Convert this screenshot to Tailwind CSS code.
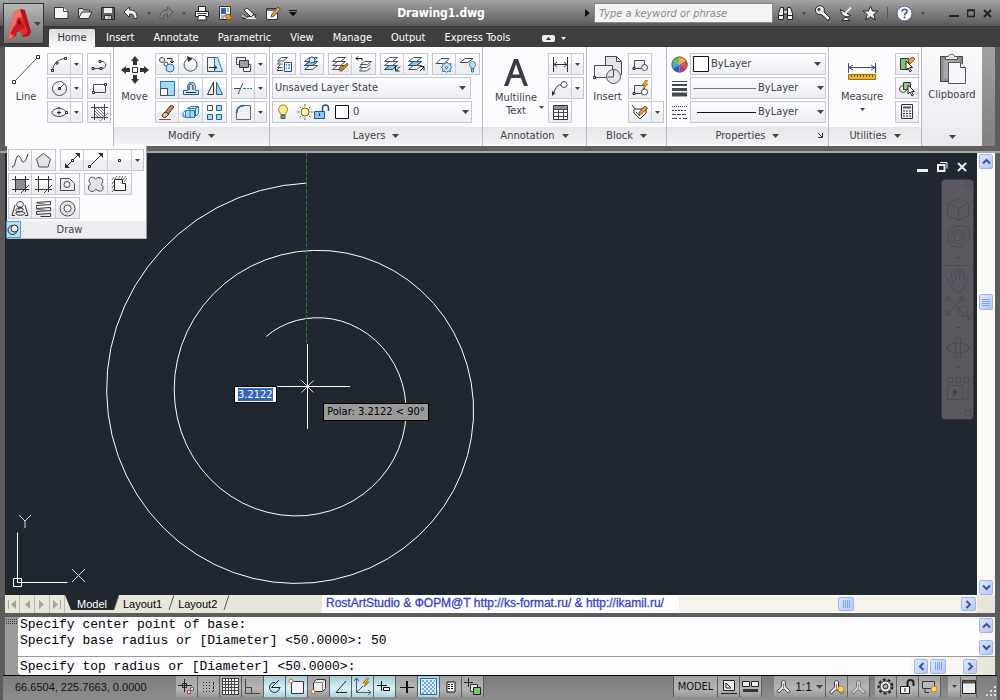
<!DOCTYPE html>
<html lang="en">
<head>
    <meta charset="UTF-8">
    <meta name="viewport" content="width=device-width, initial-scale=1.0">
    <title>Drawing1.dwg</title>
    <script src="https://cdn.jsdelivr.net/npm/@tailwindcss/browser@4"></script>
    <style>
        body { font-family: 'DejaVu Sans Condensed', 'Noto Sans', sans-serif; }
        svg { fill: none; stroke: #454a52; stroke-width: 1; flex-shrink: 0; }
        .solid { fill: #333; stroke: none; }
        .group-box { display: flex; height: 22px; border: 1px solid #c3c7d0; background: linear-gradient(#fdfdfe 45%, #eceef2 55%); }
        .group-box button { width: 22px; display: flex; align-items: center; justify-content: center; }
        .group-box button + button { width: 24px; border-left: 1px solid #c9cdd6; }
        .group-box button + .drop { width: 12px; }
        .panel-title { height: 17px; display: flex; align-items: center; justify-content: center; gap: 7px; background: linear-gradient(#e6e6ea, #f1f1f3); }
        .sb { display: flex; align-items: center; justify-content: center; background: linear-gradient(135deg, #dde8fe, #b3c8f6); border: 1px solid #9fb5e6; border-radius: 2px; }
        .st { width: 22px; display: flex; align-items: center; justify-content: center; border-right: 1px solid #5e5e5e; background: linear-gradient(#a2a2a2, #b6b6b6 60%, #999); }
        .on { background: linear-gradient(#a5cbd5, #d9f3f8 60%, #a4d3de); }
    </style>
</head>
<body class="h-screen overflow-hidden flex flex-col bg-[#5c5c5c] text-[11px] leading-[14px] text-[#3c3f45]">

<!-- Shared glyphs -->
<svg class="hidden">
    <symbol id="caret" viewBox="0 0 7 4"><path d="M0 0h7L3.500 4z" fill="#444" stroke="none"/></symbol>
    <symbol id="caret-s" viewBox="0 0 5 3"><path d="M0 0h5L2.500 3z" fill="#444" stroke="none"/></symbol>
    <symbol id="up" viewBox="0 0 9 7"><path d="M1 5.500L4.500 2L8 5.500" fill="none" stroke="#3b5594" stroke-width="2"/></symbol>
    <symbol id="down" viewBox="0 0 9 7"><path d="M1 1.500L4.500 5L8 1.500" fill="none" stroke="#3b5594" stroke-width="2"/></symbol>
    <symbol id="left" viewBox="0 0 7 9"><path d="M5.500 1L2 4.500L5.500 8" fill="none" stroke="#3b5594" stroke-width="2"/></symbol>
    <symbol id="right" viewBox="0 0 7 9"><path d="M1.500 1L5 4.500L1.500 8" fill="none" stroke="#3b5594" stroke-width="2"/></symbol>
    <symbol id="layers" viewBox="0 0 18 16"><g fill="#fafafa" stroke="#4d525a"><path d="M6.500 9.500h8l-5 4h-8z"/><path d="M6.500 5.500h8l-5 4h-8z"/><path d="M6.500 1.500h8l-5 4h-8z"/></g></symbol>
    <symbol id="scale" viewBox="0 0 16 16"><path d="M8 1l2 2v5l5 5-2 2-4-4h-2l-4 4-2-2 5-5V3z" fill="#eee" stroke="#333"/><path d="M8 5v5" stroke="#777"/></symbol>
</svg>

<header class="relative">
    <!-- Title bar -->
    <div class="h-[27px] flex items-center bg-linear-to-b from-[#a4a4a4] to-[#5a5a5a] border-b border-[#333] pl-[54px] pr-2">
        <div class="flex items-center gap-2">
            <button aria-label="New"><svg width="15" height="14"><path d="M.5 1.500h9l4.500 4v7H.5z" fill="#f4f4f4" stroke="#333"/><path d="M9.500 1.500v4H14" fill="#fff"/></svg></button>
            <button aria-label="Open"><svg width="16" height="14"><path d="M1.500 12.500v-10h4l1 1.500h6v2" fill="#ddd" stroke="#333"/><path d="M1.500 12.500l3.500-6.500h10l-3.500 6.500z" fill="#f1f1f1" stroke="#333"/></svg></button>
            <button aria-label="Save"><svg width="14" height="15"><path d="M.5 1.500h13v12h-13z" fill="#5b6470" stroke="#222"/><path d="M3 2h8v5H3z" fill="#eee" stroke="none"/><path d="M3.500 9.500h7v4h-7z" fill="#ddd" stroke="#333"/><path d="M8 10.500v2"/></svg></button>
            <button aria-label="Undo"><svg width="16" height="14"><path d="M1 6l5.500-5v3c5 0 8 2 7.500 8.500h-3c0-4-1.500-4.500-4.500-4.500v3.500z" fill="#f2f2f2" stroke="#333"/></svg></button>
            <svg width="4" height="3"><use href="#caret-s"/></svg>
            <button aria-label="Redo"><svg width="15" height="14"><path d="M14 6L8.500 1v3C4 4 .5 6 1 12.500h3C4 8.500 5.500 8 8.500 8v3.500z" fill="#858585" stroke="#555"/></svg></button>
            <svg width="4" height="3"><use href="#caret-s"/></svg>
            <button aria-label="Plot"><svg width="16" height="15"><path d="M4.500 5.500v-5h7v5M1.500 5.500h13v5h-13z" fill="#fafafa" stroke="#222"/><path d="M4.500 9.500h7l1 4.500h-9z" fill="#fff" stroke="#222"/><path d="M3 7.500h10" stroke="#555"/></svg></button>
            <button aria-label="Sheet set"><svg width="15" height="15"><path d="M1.500.5h11v13h-11z" fill="#f4f7fb" stroke="#333"/><path d="M3 2h5v6H3z" fill="#2c68b5" stroke="none"/><path d="M9 3h2M9 5h2M3 10h4M3 12h3" stroke="#667"/><path d="M7 9l4-1 3 4-4 2.500z" fill="#e89a2c" stroke="#8d5a14"/></svg></button>
            <button aria-label="Publish"><svg width="17" height="15"><path d="M1.500 12.500L15 8.500l-1 4z" fill="#ddd" stroke="#333"/><path d="M3 4l3-2 7 6-3 3z" fill="#eee" stroke="#333"/><path d="M1 9.500l5 3h9" stroke="#eee"/></svg></button>
            <button aria-label="Edit"><svg width="15" height="15"><path d="M.5 2.500h11v11H.5z" fill="#fafafa" stroke="#333"/><path d="M1 3h10v2H1z" fill="#68707c" stroke="none"/><path d="M5 11l1-3 6-7 2.500 2L8 10z" fill="#f2a33c" stroke="#555"/></svg></button>
            <button aria-label="Customize"><svg width="8" height="7"><path d="M0 .5h8" stroke="#111"/><path d="M0 2h8L4 6.500z" fill="#111" stroke="none"/></svg></button>
        </div>
        <h1 class="flex-1 text-center text-[12px] font-bold text-white">Drawing1.dwg</h1>
        <svg width="5" height="8"><path d="M0 0v8l5-4z" fill="#111" stroke="none"/></svg>
        <input type="text" aria-label="Search" placeholder="Type a keyword or phrase" class="ml-1 w-[179px] h-5 px-1 bg-[#f3f3f3] border border-[#888] italic placeholder:text-[#888]">
        <div class="ml-1 flex items-center">
            <button aria-label="Find"><svg width="17" height="16"><path d="M1.500 14.500v-6l2-6h3v12zM15.500 14.500v-6l-2-6h-3v12z" fill="#f2f2f2" stroke="#222"/><path d="M6.500 5h4v4h-4z" fill="#ccc" stroke="#222"/><path d="M1.500 10.500h5M10.500 10.500h5" stroke="#222"/></svg></button>
            <svg class="mx-2" width="4" height="3"><use href="#caret-s"/></svg>
            <button aria-label="Subscription"><svg width="17" height="16"><path d="M7.500 9.500L14 15.500l2-2.500-6-6a4.500 4.500 0 1 0-3 2.500z" fill="#f2f2f2" stroke="#222"/><circle cx="5" cy="4.500" r="1.200" fill="#444"/></svg></button>
            <button class="ml-2" aria-label="Communication"><svg width="15" height="16"><path d="M1.500 4.500C2 11 7 13.500 11.500 10.500z" fill="#f2f2f2" stroke="#222"/><path d="M6.500 8L12 2.500" stroke="#eee" stroke-width="2"/><path d="M3 15.500h8l-3-3H6z" fill="#eee" stroke="#222"/></svg></button>
            <button class="ml-2" aria-label="Favorites"><svg width="17" height="16"><path d="M8.500 1l2 5h5.500l-4.300 3.500 1.600 5.500-4.800-3.300L3.700 15l1.600-5.500L1 6h5.500z" fill="#f2f2f2" stroke="#222"/></svg></button>
            <span class="mx-2 h-3 w-px bg-[#555]"></span>
            <button aria-label="Help"><svg width="17" height="17"><circle cx="8.500" cy="8.500" r="7.500" fill="#fff" stroke="#4c5c7c"/><path d="M6 6.500c0-3 5-3 5 0 0 2-2.500 1.500-2.500 4M8.500 11.500v2" stroke="#2f5ea8" stroke-width="1.700"/></svg></button>
            <svg class="mx-2" width="4" height="3"><use href="#caret-s"/></svg>
            <button class="ml-4" aria-label="Minimize"><svg width="10" height="10"><path d="M0 8h10" stroke="#222" stroke-width="2"/></svg></button>
            <button class="ml-2" aria-label="Maximize"><svg width="8" height="9"><path d="M.5 1.500h7v6h-7zM0 1h8" stroke="#222" stroke-width="1.500"/></svg></button>
            <button class="ml-2" aria-label="Close"><svg width="9" height="9"><path d="M1 1l7 7M8 1L1 8" stroke="#222" stroke-width="2"/></svg></button>
        </div>
    </div>

    <!-- Ribbon tabs -->
    <nav class="h-5 flex items-end bg-[#3e3e3e] pl-[49px] text-[11px] font-medium text-white">
        <a href="#" class="h-[18px] w-[46px] text-center leading-[17px] bg-linear-to-b from-[#dcdcde] to-[#fafafc] text-[#333] rounded-t-[2px]">Home</a>
        <div class="flex ml-[11px] gap-[19px] h-[18px] leading-[17px]">
            <a href="#">Insert</a>
            <a href="#">Annotate</a>
            <a href="#">Parametric</a>
            <a href="#">View</a>
            <a href="#">Manage</a>
            <a href="#">Output</a>
            <a href="#">Express Tools</a>
        </div>
        <button class="ml-8 h-[18px] flex items-center gap-[6px]" aria-label="Minimize ribbon">
            <svg width="13" height="7"><rect width="13" height="7" rx="2" fill="#eee" stroke="none"/><path d="M4 5h5L6.500 2z" fill="#333" stroke="none"/></svg>
            <svg width="5" height="3"><path d="M0 0h5L2.500 3z" fill="#eee" stroke="none"/></svg>
        </button>
    </nav>

    <!-- Application button -->
    <button aria-label="Application menu" class="absolute left-[3px] top-[3px] w-[41px] h-[41px] flex items-center pl-[3px] gap-[2px] border border-[#333] bg-linear-to-b from-[#b8b8b8] to-[#747474]">
        <svg width="25" height="34">
            <path d="M8 5l6-3 4 1 6 22-2 4-6 1-2-6-4 1-1 4-6 3-2-2z" fill="#b3141c" stroke="none"/>
            <path d="M7 5l6-3 8 24-6 3-2-6-4 1-2 6-6 3z" fill="#e02b30" stroke="none"/>
            <path d="M7 5l6-3 2 8-5 1-5 20-4 1z" fill="#f4716c" stroke="none"/>
            <path d="M10 18l2-7 3 6z" fill="#7d0c12" stroke="none"/>
            <path d="M3 27l4-8 9-2 2 4-9 2-3 5z" fill="#c9171f" stroke="none"/>
        </svg>
        <svg width="7" height="4"><use href="#caret"/></svg>
    </button>
</header>

<!-- Ribbon -->
<section class="relative z-20 h-[99px] shrink-0 ml-[5px] mr-[5px] flex bg-linear-to-b from-[#a2a2a2] to-[#808080]">

    <!-- Draw -->
    <div class="relative w-[109px] shrink-0 flex bg-[#fcfcfe] border-r border-[#b9b9bd] pt-[6px]">
        <button class="w-[42px] flex flex-col items-center gap-1 self-start">
            <svg width="32" height="33"><path d="M4 29L27 5" stroke="#555"/><path d="M2.500 27.500h3v3h-3zM26.500 2.500h3v3h-3z" fill="#fff" stroke="#333"/></svg>
            Line
        </button>
        <div class="flex flex-col gap-[2px]">
            <div class="group-box"><button aria-label="Arc"><svg width="17" height="17"><path d="M1.500 14.500C2 8 7 3 14 2.500"/><path d="M.5 13.500h2v2h-2zM5 6h2v2H5zM13.500 1.500h2v2h-2z" fill="#fff" stroke="#222"/></svg></button><button class="drop" aria-label="Arc options"><svg width="5" height="3"><use href="#caret-s"/></svg></button></div>
            <div class="group-box"><button aria-label="Circle"><svg width="17" height="17"><circle cx="8.500" cy="8.500" r="7"/><path d="M8.500 8.500L13 4"/><path d="M7.500 7.500h2v2h-2z" stroke="#222"/></svg></button><button class="drop" aria-label="Circle options"><svg width="5" height="3"><use href="#caret-s"/></svg></button></div>
            <div class="group-box"><button aria-label="Ellipse"><svg width="17" height="13"><ellipse cx="8" cy="6.500" rx="7" ry="4"/><path d="M8 4.500v4M6 6.500h4" stroke="#222"/><path d="M7.500 1.500h1v1h-1zM14.500 5.500h2v2h-2z" fill="#fff" stroke="#222"/></svg></button><button class="drop" aria-label="Ellipse options"><svg width="5" height="3"><use href="#caret-s"/></svg></button></div>
        </div>
        <div class="flex flex-col gap-[2px] ml-1">
            <div class="group-box"><button aria-label="Polyline"><svg width="17" height="15"><path d="M2 11.500h9c5 0 5-7 0-7H9"/><path d="M1 10.500h2v2H1zM8 3.500h2v2H8zM9 10.500h2v2H9z" fill="#fff" stroke="#222"/></svg></button></div>
            <div class="group-box"><button aria-label="Rectangle"><svg width="17" height="15"><path d="M2.500 3.500h12v8h-12z"/><path d="M1.500 10.500h2v2h-2zM13.500 2.500h2v2h-2z" fill="#fff" stroke="#222"/></svg></button></div>
            <div class="group-box"><button aria-label="Hatch"><svg width="17" height="17"><path d="M3.500 0v16M13.500 0v16M0 3.500h17M0 13.500h17" stroke="#444"/><path d="M4 4l9 9M7 4l6 6M4 7l6 6M10 4l3 3M4 10l3 3M9 17l8-8" stroke="#777"/></svg></button></div>
        </div>

        <!-- Expanded Draw panel -->
        <div class="absolute left-[2px] top-full w-[140px] bg-[#fcfcfe] pt-[3px] border-r border-[#999]">
            <div class="flex flex-col gap-[2px] px-px">
                <div class="flex gap-1">
                    <div class="group-box">
                        <button aria-label="Spline"><svg width="18" height="17"><path d="M1 15C5 15 4 5 7 4s3 6 5 6 3-2 5-8" stroke="#333"/></svg></button>
                        <button aria-label="Polygon"><svg width="17" height="17"><path d="M8.500 1.500l7 5.500-2.500 8H4L1.500 7z" fill="#e5e5e7"/></svg></button>
                    </div>
                    <div class="group-box">
                        <button aria-label="Construction line"><svg width="17" height="17"><path d="M2 15L15 2" stroke="#333"/><path d="M1 16v-5l5 5zM16 1v5l-5-5z" class="solid"/><path d="M7.500 7.500h2v2h-2z" fill="#fff" stroke="#222"/></svg></button>
                        <button aria-label="Ray"><svg width="17" height="17"><path d="M2 15L15 2" stroke="#333"/><path d="M16 1v5l-5-5z" class="solid"/><path d="M1.500 13.500h2v2h-2z" fill="#fff" stroke="#222"/></svg></button>
                        <button aria-label="Point"><svg width="5" height="5"><path d="M1.500 1.500h2v2h-2z" stroke="#222"/></svg></button>
                        <button class="drop" aria-label="Point options"><svg width="5" height="3"><use href="#caret-s"/></svg></button>
                    </div>
                </div>
                <div class="flex gap-1">
                    <div class="group-box">
                        <button aria-label="Gradient"><svg width="17" height="17"><path d="M4 4h9v9H4z" fill="#8c8c90" stroke="none"/><path d="M3.500 0v16M13.500 0v16M0 3.500h17M0 13.500h17M9 17l8-8" stroke="#333"/></svg></button>
                        <button aria-label="Boundary"><svg width="17" height="17"><path d="M3.500 0v16M13.500 0v16M0 3.500h17M0 13.500h17M9 17l8-8" stroke="#333"/></svg></button>
                        <button aria-label="Region"><svg width="17" height="15"><path d="M1.500 1.500h9l5 5v7h-14z" fill="#ececee"/><circle cx="8" cy="7.500" r="3"/></svg></button>
                    </div>
                    <div class="group-box">
                        <button aria-label="Revision cloud"><svg width="18" height="17"><path d="M8.500 3C7 0 1.500 1 2 5c0 2 2 2 1.500 3.500C1 9 0 15 5 15.500c2 0 3-1 4-2.500 2 3 7 3 7-1 0-2-1-3-2-3.500 3-2 2-7-2-7-2 0-3 1-3.500 1.500z" fill="#e5e5e7"/></svg></button>
                        <button aria-label="Wipeout"><svg width="17" height="17"><path d="M3.500 3.500h8v4h3v7h-11z" fill="#fff" stroke="#222"/><path d="M1 4l2-3M4 3l2-3M7 3l2-3M10 3l2-3M13 6l3-4M1 8l2-3M1 12l2-3M1 16l2-3M12 4l3-4" stroke="#666"/></svg></button>
                    </div>
                </div>
                <div class="flex">
                    <div class="group-box">
                        <button aria-label="Helix"><svg width="18" height="17"><path d="M4 5L1 15.500h3M14 5l3 10.500h-3" stroke="#333"/><path d="M10 7C5 8 4 2 9 1.500s4 7-1 6.500M12 9c-4-3-8 0-7 2s8 1 7-2-5-2-4 1M14 13c0 3-10 3-9 0s8-1 9 0" stroke="#333"/></svg></button>
                        <button aria-label="3D polyline"><svg width="18" height="17"><path d="M1.500 2.500l14-1v3l-14 1v3l14-1v3l-14 1v3l14-1v3h-10" stroke="#333"/><path d="M1 3l15 2M1 9l15 2" stroke="#777"/></svg></button>
                        <button aria-label="Donut"><svg width="17" height="17"><circle cx="8.500" cy="8.500" r="7.500" fill="#e5e5e7"/><circle cx="8.500" cy="8.500" r="3.500" fill="#fff"/></svg></button>
                    </div>
                </div>
            </div>
            <div class="h-[18px] mt-[2px] flex items-center bg-[#ededf0] border-b border-[#bbb]">
                <button aria-label="Pin" class="w-[15px] h-[17px] flex items-center justify-center border border-[#4b9cd8] bg-[#b9def7] -ml-px"><svg width="13" height="13"><circle cx="5.500" cy="7" r="4.500" stroke="#222"/><circle cx="7.500" cy="5.500" r="3.500" fill="#fff" stroke="#222"/></svg></button>
                <span class="flex-1 text-center pr-7">Draw</span>
            </div>
        </div>
    </div>

    <!-- Modify -->
    <div class="w-[156px] shrink-0 flex flex-col justify-between bg-[#fcfcfe] border-r border-[#b9b9bd] pt-[6px] pb-[2px]">
        <div class="flex">
            <button class="w-[41px] flex flex-col items-center gap-1 self-start">
                <svg width="30" height="33"><path d="M15 3l4 5h-2v4h-4V8h-2zM15 31l4-5h-2v-4h-4v4h-2zM1 17l5-4v2h4v4H6v2zM29 17l-5-4v2h-4v4h4v2z" class="solid"/><path d="M12.500 14.500h5v5h-5z" fill="#fff" stroke="#333"/></svg>
                Move
            </button>
            <div class="flex flex-col gap-[2px]">
                <div class="group-box">
                    <button aria-label="Copy"><svg width="18" height="17"><circle cx="4" cy="4" r="2.500"/><circle cx="8" cy="8" r="2" fill="#eee"/><circle cx="12" cy="12" r="4" fill="#bfe0f4" stroke="#2878b0"/><path d="M9 2.500h5v4M12 5l2 2 2-2" stroke="#222"/></svg></button>
                    <button aria-label="Rotate"><svg width="17" height="17"><path d="M5.500 3A6.500 6.500 0 1 0 11 2.700"/><path d="M5 0l6 2.500L6 6z" class="solid"/></svg></button>
                    <button aria-label="Stretch"><svg width="18" height="17"><path d="M1.500 1.500h7v14h-7z" fill="#f2f2f2"/><path d="M8.500 1.500h3l5 14h-8z" fill="#cbe7f7" stroke="#2878b0"/><path d="M3 11.500h7M8 9l3 2.500L8 14" stroke="#222"/></svg></button>
                </div>
                <div class="group-box">
                    <button aria-label="Scale"><svg width="17" height="17"><path d="M1.500 1.500h14v14h-14z" fill="#a9d6f1" stroke="#2878b0"/><path d="M1.500 8.500h7v7h-7z" fill="#f7f7f7"/></svg></button>
                    <button aria-label="Offset"><svg width="18" height="17"><path d="M1.500 14.500v-4h4c1-1 0-2 0-3 0-7 8-7 8 0 0 1-1 2 0 3h3v4z" fill="#cbe7f7" stroke="#20639b"/><path d="M4 12.500h10M7 10V7c0-4 4-4 4 0v3" stroke="#222"/></svg></button>
                    <button aria-label="Mirror"><svg width="18" height="17"><path d="M7.500 2v12.500h-6z" fill="#eee" stroke="#333"/><path d="M10.500 2v12.500h6z" fill="#a9d6f1" stroke="#20639b"/></svg></button>
                </div>
                <div class="group-box">
                    <button aria-label="Erase"><svg width="18" height="17"><path d="M5 11l7-9c1-1 4 0 4 1l-8 10z" fill="#c08a5a" stroke="#4c3626"/><path d="M4 11l3-3 4 2-3 3c-2 1-4 0-4-2z" fill="#e8c66a" stroke="#333"/><path d="M1 15.500h12" stroke="#c0392b"/></svg></button>
                    <button aria-label="Explode"><svg width="18" height="16"><path d="M5.500 4.500l3-2h8l-3 2zM13.500 4.500l3-2v7l-3 3z" fill="#d5ecf9" stroke="#2878b0"/><path d="M3.500 6.500h9v7h-9zM1.500 8l2-1.500M8 5v9M1 8.500v4l3 1" fill="#a9d6f1" stroke="#2878b0"/></svg></button>
                    <button aria-label="Array"><svg width="17" height="17"><path d="M1.500 1.500h5v5h-5z" fill="#f5f5f5"/><path d="M10.500 1.500h5v5h-5zM1.500 10.500h5v5h-5zM10.500 10.500h5v5h-5z" fill="#a9d6f1" stroke="#20639b"/></svg></button>
                </div>
            </div>
            <div class="flex flex-col gap-[2px] ml-1">
                <div class="group-box"><button aria-label="Draw order"><svg width="17" height="17"><path d="M1.500 1.500h9v7h-9z" fill="#eee"/><path d="M8.500 8.500h7v7h-7z" fill="#fff"/><path d="M4.500 4.500h9v7h-9z" fill="#9c9ca2" stroke="#333"/></svg></button><button class="drop" aria-label="Order options"><svg width="5" height="3"><use href="#caret-s"/></svg></button></div>
                <div class="group-box"><button aria-label="Trim"><svg width="18" height="15"><path d="M0 7.500h7M4 13L9 2"/><path d="M9 7.500h3M13 7.500h2M16 7.500h2" stroke="#2878b0"/></svg></button><button class="drop" aria-label="Trim options"><svg width="5" height="3"><use href="#caret-s"/></svg></button></div>
                <div class="group-box"><button aria-label="Fillet"><svg width="17" height="17"><path d="M1.500 15.500v-6c0-5 3-8 8-8h6v14z" fill="#eef0f3" stroke="#667"/><path d="M1.500 9.500c0-5 3-8 8-8" stroke="#20639b" stroke-width="1.500"/></svg></button><button class="drop" aria-label="Fillet options"><svg width="5" height="3"><use href="#caret-s"/></svg></button></div>
            </div>
        </div>
        <div class="panel-title">Modify <svg width="7" height="4"><use href="#caret"/></svg></div>
    </div>

    <!-- Layers -->
    <div class="w-[213px] shrink-0 flex flex-col justify-between bg-[#fcfcfe] border-r border-[#b9b9bd] pt-[6px] pb-[2px]">
        <div class="flex flex-col gap-[2px] px-[2px]">
            <div class="flex gap-1">
                <div class="group-box"><button aria-label="Layer properties"><svg width="18" height="17"><path d="M6.500 1.500h6l-4 3.500h-6zM5 5.500L2.500 8h5M5 9l-2.500 2.500h5M4 12l-2 2.500h6" fill="#fff"/><path d="M9.500 6.500h7v9h-7z" fill="#e6f1fa" stroke="#20508a"/><path d="M11 9h1M13 9h2M11 12h1M13 12h2" stroke="#20508a"/></svg></button></div>
                <div class="group-box"><button aria-label="Make current"><svg width="18" height="16"><use href="#layers"/><path d="M6.500 5.500h8l-5 4h-8z" fill="#8cc6ea" stroke="#20508a"/><circle cx="9" cy="4" r="3" fill="#dff0fa" stroke="#20508a"/></svg></button></div>
                <div class="group-box"><button aria-label="Match layer"><svg width="18" height="16"><use href="#layers"/><path d="M8 12l3-3 1 2 4-4 1 2-4 4-2 2H9z" fill="#c9812f" stroke="#8a5a22"/></svg></button><button aria-label="Previous layer"><svg width="18" height="17"><path d="M9.500 5.500h7l-4 3h-7zM7 8.500l-2.500 3h7l4-3M7 12l-2.500 3h7l4-3" fill="#fafafa" stroke="#4d525a"/><path d="M1 2.500h6v2M3 .5L1 2.500l2 2" stroke="#111"/></svg></button></div>
                <div class="group-box"><button aria-label="Isolate layer"><svg width="18" height="16"><use href="#layers"/><path d="M6.500 9.500h7l-4 4h-8z" fill="#8cc6ea" stroke="#20508a"/><path d="M17 10.500l-4 4M12.500 11v4h4" stroke="#111"/></svg></button><button aria-label="Unisolate layer"><svg width="18" height="16"><use href="#layers"/><path d="M6.500 5.500h8l-5 4h-8z" fill="#8cc6ea" stroke="#20508a"/><path d="M13 15l4-4M13 10.500h4v4" stroke="#111"/></svg></button></div>
                <div class="group-box"><button aria-label="Freeze layer"><svg width="18" height="17"><path d="M6 2.500h8l-5 5H1z" fill="#fff"/><path d="M12 6l1.500 2 2.500-.5-.5 2.500L17 11.500 15 13l.5 2.500-2.500-.5-1.500 1.500L10 15l-2.500.5L8 13l-1.500-1.500L8 10l-.5-2.500L10 8z" fill="#cfe6f6" stroke="#2c72ae"/><circle cx="11.500" cy="11.500" r="1.200" fill="#fff" stroke="#2c72ae"/></svg></button><button aria-label="Turn layer off"><svg width="18" height="17"><path d="M6 2.500h8l-5 4H1z" fill="#fff"/><path d="M10.500 8.500c0-4 6-4 6 0 0 2-1.500 2-1.500 4h-3c0-2-1.500-2-1.500-4zM12.500 13h2v3h-2z" fill="#b7daf0" stroke="#3f78a8"/></svg></button></div>
            </div>
            <div class="flex items-center h-[22px] w-[199px] border border-[#c3c7d0] bg-linear-to-b from-[#fdfdfe] to-[#eceef2] pr-1">
                <select aria-label="Layer state" class="appearance-none flex-1 h-full pl-[2px] bg-transparent"><option>Unsaved Layer State</option></select>
                <svg width="7" height="4"><use href="#caret"/></svg>
            </div>
            <div class="flex items-center h-[22px] w-[200px] border border-[#c3c7d0] bg-linear-to-b from-[#fdfdfe] to-[#eceef2] pl-1 pr-[2px]">
                <svg width="12" height="17"><path d="M1.500 5.500c0-6 9-6 9 0 0 2-2 3-2 5h-5c0-2-2-3-2-5z" fill="#ffe98a" stroke="#97812d"/><path d="M4 11.500h4v3H4z" fill="#8898aa" stroke="#555"/></svg>
                <svg class="ml-2" width="17" height="17"><circle cx="8" cy="8" r="4" fill="#fff1a6" stroke="#7b6a22"/><path d="M8 0v2.500M8 13.500V16M0 8h2.500M13.500 8H16M2.500 2.500L4 4M12 12l1.500 1.500M13.500 2.500L12 4M4 12l-1.500 1.500" stroke="#7b6a22"/></svg>
                <svg width="17" height="16"><path d="M.5 7.500h10v7H.5z" fill="#8fc8ea" stroke="#20508a"/><path d="M8.500 7V4c0-4 6-4 6 0v3" stroke="#20508a" stroke-width="1.500"/><path d="M5.500 9v3" stroke="#123"/></svg>
                <svg class="ml-1" width="14" height="14"><path d="M.5.500h13v13H.5z" fill="#fff" stroke="#111"/></svg>
                <select aria-label="Layer" class="appearance-none flex-1 h-full pl-1 bg-transparent"><option>0</option></select>
                <svg width="7" height="4"><use href="#caret"/></svg>
            </div>
        </div>
        <div class="panel-title">Layers <svg width="7" height="4"><use href="#caret"/></svg></div>
    </div>

    <!-- Annotation -->
    <div class="w-[104px] shrink-0 flex flex-col justify-between bg-[#fcfcfe] border-r border-[#b9b9bd] pt-[6px] pb-[2px]">
        <div class="flex justify-end pr-[2px]">
            <button class="flex-1 flex items-end justify-end self-start gap-[2px] pr-1">
                <span class="flex flex-col items-center leading-[13px]">
                    <svg class="mb-1" width="28" height="34"><path d="M2 33L12 6h4l10 27h-4l-3-8H9l-3 8zM10.500 21.500h7L14 11z" fill="#3a3d42" stroke="none"/></svg>
                    Multiline<br>Text
                </span>
                <svg class="mb-2" width="5" height="3"><use href="#caret-s"/></svg>
            </button>
            <div class="flex flex-col gap-[2px]">
                <div class="group-box"><button aria-label="Linear dimension"><svg width="17" height="15"><path d="M1.500 0v15M15.500 0v15M2 7.500h13M5 5L2 7.500 5 10M12 5l3 2.500-3 2.500" stroke="#333"/></svg></button><button class="drop" aria-label="Dimension options"><svg width="5" height="3"><use href="#caret-s"/></svg></button></div>
                <div class="group-box"><button aria-label="Leader"><svg width="18" height="17"><circle cx="13" cy="4.500" r="3"/><path d="M10 5c-3 0-4 0-8 9" stroke="#333"/><path d="M1 16v-5l3.500 2z" class="solid"/></svg></button><button class="drop" aria-label="Leader options"><svg width="5" height="3"><use href="#caret-s"/></svg></button></div>
                <div class="group-box self-start"><button aria-label="Table"><svg width="17" height="17"><path d="M1.500 1.500h14v14h-14z" fill="#fff" stroke="#333"/><path d="M2 2h13v3H2z" fill="#8c8f96" stroke="none"/><path d="M1.500 5.500h14M1.500 8.500h14M1.500 12.500h14M6.500 5v10M11.500 5v10"/></svg></button></div>
            </div>
        </div>
        <div class="panel-title">Annotation <svg width="7" height="4"><use href="#caret"/></svg></div>
    </div>

    <!-- Block -->
    <div class="w-[80px] shrink-0 flex flex-col justify-between bg-[#fcfcfe] border-r border-[#b9b9bd] pt-[6px] pb-[2px]">
        <div class="flex">
            <button class="w-[41px] flex flex-col items-center gap-1 self-start">
                <svg width="32" height="33"><path d="M13.500 3.500h11l5 5v13h-16z" fill="#e4e5e9"/><path d="M24.500 3.500v5h5"/><path d="M2.500 12.500h18v12h-18z" fill="#f1f2f5"/><circle cx="21.500" cy="23.500" r="7" fill="#e4e6ea" stroke="#555"/><path d="M21.500 17v7h-6" /><path d="M1.500 23.500h2v2h-2z" fill="#fff" stroke="#222"/></svg>
                Insert
            </button>
            <div class="flex flex-col gap-[2px]">
                <div class="group-box self-start"><button aria-label="Create block"><svg width="17" height="15"><path d="M2.500 3.500h10v8h-10z" fill="#eee"/><circle cx="12.500" cy="10.500" r="3" fill="#fff"/><path d="M1 10.500h2v2H1z" fill="#fff" stroke="#222"/></svg></button></div>
                <div class="group-box self-start"><button aria-label="Block editor"><svg width="17" height="17"><path d="M2.500 5.500h10v8h-10z" fill="#eee"/><circle cx="12.500" cy="12" r="3" fill="#fff"/><path d="M14 0l-4 5h3l-2 4 5-5h-3l3-4z" fill="#f7b731" stroke="#b67a10"/><path d="M1 12.500h2v2H1z" fill="#fff" stroke="#222"/></svg></button></div>
                <div class="group-box self-start"><button aria-label="Edit attributes"><svg width="18" height="17"><path d="M1 1l3 4h11v4l-6 6-6-6V5" fill="#f7f7f7" stroke="#222"/><path d="M5 8l4 4" stroke="#555"/><path d="M14 2l2.500 2-6 6-3 1 1-3z" fill="#f2a33c" stroke="#7a4a12"/></svg></button><button class="drop" aria-label="Attribute options"><svg width="5" height="3"><use href="#caret-s"/></svg></button></div>
            </div>
        </div>
        <div class="panel-title">Block <svg width="7" height="4"><use href="#caret"/></svg></div>
    </div>

    <!-- Properties -->
    <div class="w-[162px] shrink-0 flex flex-col justify-between bg-[#fcfcfe] border-r border-[#b9b9bd] pt-[6px] pb-[2px]">
        <div class="flex flex-col gap-[2px] pl-1 pr-[2px]">
            <div class="flex items-center gap-[2px]">
                <svg width="17" height="17"><g stroke="none"><path d="M8.500 8.500V.500A8 8 0 0 1 15.500 4.500z" fill="#f0b03c"/><path d="M8.500 8.500l7-4a8 8 0 0 1 0 8z" fill="#e0503a"/><path d="M8.500 8.500l7 4a8 8 0 0 1-7 4z" fill="#b03a9c"/><path d="M8.500 8.500v8a8 8 0 0 1-7-4z" fill="#3a58c8"/><path d="M8.500 8.500l-7 4a8 8 0 0 1 0-8z" fill="#35b6c9"/><path d="M8.500 8.500l-7-4a8 8 0 0 1 7-4z" fill="#6cc24a"/></g><circle cx="8.500" cy="8.500" r="7.500" stroke="#666"/></svg>
                <div class="flex-1 flex items-center h-[22px] border border-[#c3c7d0] bg-linear-to-b from-[#fdfdfe] to-[#eceef2] pl-[2px] pr-1">
                    <svg width="16" height="16"><path d="M.5.500h15v15H.5z" fill="#fff" stroke="#111"/></svg>
                    <select aria-label="Object color" class="appearance-none flex-1 h-full pl-[2px] bg-transparent"><option>ByLayer</option></select>
                    <svg width="7" height="4"><use href="#caret"/></svg>
                </div>
            </div>
            <div class="flex items-center gap-[2px]">
                <svg width="17" height="17"><path d="M1 1.500h15" /><path d="M1 5h15" stroke-width="2"/><path d="M1 9.500h15" stroke-width="3"/><path d="M1 14.500h15" stroke-width="4"/></svg>
                <div class="flex-1 flex items-center h-[22px] border border-[#c3c7d0] bg-linear-to-b from-[#fdfdfe] to-[#eceef2] pl-[2px] pr-px">
                    <svg width="63" height="3"><path d="M0 1.500h63" stroke="#777"/></svg>
                    <select aria-label="Lineweight" class="appearance-none flex-1 h-full pl-[2px] bg-transparent"><option>ByLayer</option></select>
                    <svg width="7" height="4"><use href="#caret"/></svg>
                </div>
            </div>
            <div class="flex items-center gap-[2px]">
                <svg width="17" height="17"><path d="M1 2.500h15" stroke-dasharray="1 1"/><path d="M1 6.500h15" stroke-dasharray="2 1"/><path d="M1 10.500h15" stroke-dasharray="4 1"/><path d="M1 14.500h15" stroke-dasharray="5 2 2 2"/></svg>
                <div class="flex-1 flex items-center h-[22px] border border-[#c3c7d0] bg-linear-to-b from-[#fdfdfe] to-[#eceef2] pl-[6px] pr-px">
                    <svg width="59" height="3"><path d="M0 1.500h59" stroke="#111"/></svg>
                    <select aria-label="Linetype" class="appearance-none flex-1 h-full pl-[2px] bg-transparent"><option>ByLayer</option></select>
                    <svg width="7" height="4"><use href="#caret"/></svg>
                </div>
            </div>
        </div>
        <div class="panel-title relative">Properties <svg width="7" height="4"><use href="#caret"/></svg>
            <button aria-label="Properties palette" class="absolute right-[5px]"><svg width="5" height="5"><path d="M0 0l4 4M4.500 0v4.500H0" stroke="#333"/></svg></button>
        </div>
    </div>

    <!-- Utilities -->
    <div class="w-[93px] shrink-0 flex flex-col justify-between bg-[#fcfcfe] border-r border-[#b9b9bd] pt-[6px] pb-[2px]">
        <div class="flex justify-end pr-[2px]">
            <button class="flex-1 flex flex-col items-center gap-1 self-start">
                <svg width="30" height="33"><path d="M1.500 10v10M28.500 10v10M2 14.500h26M6 12l-4 2.500L6 17M24 12l4 2.500-4 2.500" stroke="#2d4f78"/><path d="M1.500 21.500h27v5h-27z" fill="#f0b52b" stroke="#9a6a10"/><path d="M4.500 22v2M7.500 22v2M10.500 22v2M13.500 22v2M16.500 22v2M19.500 22v2M22.500 22v2M25.500 22v2" stroke="#7a5210"/></svg>
                Measure
                <svg width="5" height="3"><use href="#caret-s"/></svg>
            </button>
            <div class="flex flex-col gap-[2px]">
                <div class="group-box"><button aria-label="Quick select"><svg width="18" height="17"><path d="M2.500 2.500h8v11h-8z" fill="#7fc36a" stroke="#333"/><path d="M10 4l5-3 2 2-5 5z" fill="#f2a33c" stroke="#8a5a14"/><path d="M8 5v9l2-2 2 4 1.500-1-2-3.500h3z" fill="#fff" stroke="#222"/></svg></button></div>
                <div class="group-box"><button aria-label="Select all"><svg width="18" height="17"><circle cx="5" cy="9" r="3.500"/><path d="M5.500 2.500h7v7h-7z" fill="#8fce7a" stroke="#333"/><path d="M10 5v9l2-2 2 4 1.500-1-2-3.500h3z" fill="#fff" stroke="#222"/></svg></button></div>
                <div class="group-box"><button aria-label="Calculator"><svg width="12" height="16"><path d="M.5.500h11v14H.5z" fill="#f1f1f4" stroke="#333"/><path d="M2 3.500h8" stroke="#555" stroke-width="2"/><path d="M2 7h8M2 9.500h8M2 12h8" stroke="#333" stroke-dasharray="2 1"/></svg></button></div>
            </div>
        </div>
        <div class="panel-title">Utilities <svg width="7" height="4"><use href="#caret"/></svg></div>
    </div>

    <!-- Clipboard -->
    <button class="w-[60px] shrink-0 flex flex-col items-center bg-linear-to-b from-[#fafafc] to-[#e9e9ef] pt-[5px]">
        <svg width="30" height="34"><path d="M3.500 4.500h22v25h-22z" fill="#8a8c8a" stroke="#444"/><path d="M6.500 7.500h16v19h-16z" fill="#a7a9a6" stroke="none"/><path d="M8.500 7.500v-3h3c0-3 6-3 6 0h3v3z" fill="#e8e8e8" stroke="#555"/><path d="M11.500 10.500h12l5 5v16h-17z" fill="#f6f7fa" stroke="#555"/><path d="M23.500 10.500v5h5" fill="#fff"/></svg>
        <span class="mt-[2px]">Clipboard</span>
        <svg class="mt-auto mb-[7px]" width="7" height="4"><use href="#caret"/></svg>
    </button>
</section>

<!-- Drawing window -->
<div class="h-[7px] shrink-0 bg-[#606060] border-b-2 border-[#a5a5a5]"></div>
<main class="relative flex-1 min-h-0 ml-[5px] mr-[5px] flex flex-col">
    <div class="flex-1 min-h-0 flex">
        <div class="relative flex-1 min-w-0 bg-[#21272e] overflow-hidden">
            <svg class="absolute inset-0 w-full h-full">
                <path id="helix" stroke="#fff"/>
                <path d="M301.500 0v192" stroke="#2c7a38" stroke-dasharray="4 2"/>
                <path d="M302.500 191v85M272 233.500h73" stroke="#fff"/>
                <path d="M296.500 227.500l12 12M308.500 227.500l-12 12" stroke="#ddd"/>
            </svg>
            <svg class="absolute left-[6px] bottom-2" width="76" height="76">
                <path d="M6.500 71.500v-50M6.500 71.500h50M2.500 67.500h8v8h-8z" stroke="#fff"/>
                <path d="M8 4l6 6 6-6M14 10v7M61 58l13 13M74 58L61 71" stroke="#ddd"/>
            </svg>
            <label class="absolute left-[229px] top-[233px] w-[43px] h-[17px] border border-black bg-white flex items-center px-[3px]">
                <input type="text" value="3.2122" aria-label="Radius" class="w-[35px] h-[13px] bg-[#3166bd] text-white text-[11px]">
            </label>
            <div class="absolute left-[318px] top-[250px] h-[18px] w-[106px] leading-4 text-center whitespace-nowrap border border-black bg-[#9a9a9a] text-black">Polar: 3.2122 &lt; 90°</div>

            <!-- Document window controls -->
            <div class="absolute right-[10px] top-2 flex items-center gap-[9px]">
                <button aria-label="Minimize drawing"><svg width="11" height="12"><path d="M0 9.500h11" stroke="#eee" stroke-width="3"/></svg></button>
                <button aria-label="Restore drawing"><svg width="11" height="12"><path d="M3 1.500h7v6" stroke="#eee"/><path d="M1 4h6.500v6H1z" stroke="#eee" stroke-width="2"/></svg></button>
                <button aria-label="Close drawing"><svg width="10" height="12"><path d="M1 2l8 8M9 2l-8 8" stroke="#eee" stroke-width="2"/></svg></button>
            </div>

            <!-- Navigation bar -->
            <div class="absolute right-[3px] top-[26px] w-[33px] h-[241px] rounded-sm border border-[#3a3840] bg-[#5b595f]">
                <svg width="31" height="239">
                    <g stroke="#4a4b52">
                        <circle cx="26" cy="5" r="3"/>
                        <path d="M5.500 23.500l11-5 10 5v12l-10 5-11-5zM5.500 23.500l11 5 10-5M16.500 28.500v12"/>
                        <path d="M14 46.500c8-1 12 0 13 2 1 4 1 10-2 14-3 5-14 7-18 0C4 55 7 47 14 46.500z"/><circle cx="16" cy="57" r="7"/><circle cx="16" cy="57" r="4"/>
                        <path d="M3 85.500h25M3 196.500h0"/>
                        <path d="M10 108l-5-8c0-2 2-2 3 0l3 3-2-11c1-2 3-1 3 1l2 7V90c1-2 3-2 3 0v10l2-9c1-2 3-1 3 1l-1 9 3-4c2-1 2 1 2 2l-5 11c-4 4-8 3-11-2z" fill="#565a60"/>
                        <path d="M5 118l18 16M5 134l15-15M4 117h4v4H4zM18 117h4v4h-4zM4 131h4v4H4z"/><circle cx="21" cy="131" r="5"/><path d="M25 135l3 5" stroke-width="2"/>
                        <ellipse cx="16" cy="168" rx="11" ry="5"/><path d="M13.500 157.500h5v20h-5zM8 171l-4-3 5-3M24 171l4-3"/>
                        <path d="M5.500 197.500h5v5h-5zM13.500 197.500h5v5h-5zM21.500 197.500h5v5h-5zM5.500 205.500h15v14h-15z"/><path d="M22 219h4v-13"/>
                        <circle cx="26" cy="233" r="3"/>
                    </g>
                    <path d="M14 77h4l-2 2zM14 147h4l-2 2zM14 186h4l-2 2zM11 209v7l5-3.500z" fill="#414248" stroke="none"/>
                </svg>
            </div>
        </div>
        <!-- Vertical scroll bar -->
        <div class="w-[18px] flex flex-col items-center justify-between bg-[#fbfaf6] pt-px">
            <button aria-label="Scroll up" class="sb w-[14px] h-[15px]"><svg width="9" height="7"><use href="#up"/></svg></button>
            <div class="sb w-[14px] h-4 -mt-[145px]"><svg width="8" height="8"><path d="M0 1.500h8M0 3.500h8M0 5.500h8M0 7.500h8" stroke="#86a0dc"/></svg></div>
            <button aria-label="Scroll down" class="sb w-[14px] h-[15px]"><svg width="9" height="7"><use href="#down"/></svg></button>
        </div>
    </div>

    <!-- Layout tabs -->
    <div class="h-[18px] shrink-0 flex bg-[#e8e6d8] text-black">
        <div class="flex">
            <button aria-label="First layout" class="w-[15px] flex items-center justify-center border-r border-[#bdbba8]"><svg width="8" height="9"><path d="M.5 0v9" stroke="#a5a595"/><path d="M8 0v9L3 4.500z" fill="#a5a595" stroke="none"/></svg></button>
            <button aria-label="Previous layout" class="w-[15px] flex items-center justify-center border-r border-[#bdbba8]"><svg width="6" height="9"><path d="M6 0v9L1 4.500z" fill="#a5a595" stroke="none"/></svg></button>
            <button aria-label="Next layout" class="w-[15px] flex items-center justify-center border-r border-[#bdbba8]"><svg width="6" height="9"><path d="M0 0v9l5-4.500z" fill="#a5a595" stroke="none"/></svg></button>
            <button aria-label="Last layout" class="w-[15px] flex items-center justify-center border-r border-[#bdbba8]"><svg width="8" height="9"><path d="M7.500 0v9" stroke="#a5a595"/><path d="M0 0v9l5-4.500z" fill="#a5a595" stroke="none"/></svg></button>
        </div>
        <div class="flex font-['Liberation_Sans'] text-[11px] leading-[18px]">
            <svg width="8" height="16"><path d="M0 0h8v15H6z" fill="#21272e" stroke="none"/></svg>
            <a href="#" class="h-[15px] bg-[#21272e] text-white px-1">Model</a>
            <svg width="8" height="16"><path d="M0 0h8L3 15H0z" fill="#21272e" stroke="none"/><path d="M8 0L3 15" stroke="#777"/></svg>
            <a href="#" class="px-1 h-4">Layout1</a>
            <svg width="8" height="16"><path d="M8 0L3 15" stroke="#555"/></svg>
            <a href="#" class="px-1 h-4">Layout2</a>
            <svg width="8" height="16"><path d="M8 0L3 15" stroke="#555"/></svg>
        </div>
        <div class="flex-1 flex justify-end">
            <div class="w-[357px] bg-white pl-1 font-['Liberation_Sans'] text-[12px] leading-[16px] text-[#3a3fc4] [-webkit-text-stroke:0.3px_#3a3fc4] whitespace-nowrap">RostArtStudio &amp; ФОРМ@Т http://ks-format.ru/ &amp; http://ikamil.ru/</div>
        </div>
        <div class="w-[298px] flex items-center justify-end bg-[#f4f2ec] border-y border-white">
            <div class="sb w-4 h-[14px] mr-[107px]"><svg width="8" height="8"><path d="M1.500 0v8M3.500 0v8M5.500 0v8M7.500 0v8" stroke="#86a0dc"/></svg></div>
            <button aria-label="Scroll right" class="sb w-[15px] h-[14px] mr-px"><svg width="7" height="9"><use href="#right"/></svg></button>
        </div>
        <div class="w-[18px]"></div>
    </div>
</main>

<!-- Command line -->
<section class="mt-1 ml-[5px] mr-[5px] h-[58px] shrink-0 flex bg-[#9b9b9b]">
    <div class="w-[13px] pt-[2px] flex justify-center"><svg width="12" height="5"><path d="M0 .5h12M0 2.500h12M0 4.500h12" stroke="#333" stroke-dasharray="1 1"/></svg></div>
    <div class="flex-1 flex flex-col bg-[#fdfcfe] font-['Liberation_Mono'] text-[13px] leading-4 text-black whitespace-pre rounded-l-sm">
        <div class="flex h-[39px]">
            <div class="flex-1 pl-[2px]">Specify center point of base:<br>Specify base radius or [Diameter] &lt;50.0000&gt;: 50</div>
            <div class="w-4 flex flex-col justify-between py-px bg-[#f7f6f0]">
                <button aria-label="History up" class="sb w-[14px] h-[15px]"><svg width="9" height="7"><use href="#up"/></svg></button>
                <button aria-label="History down" class="sb w-[14px] h-[15px]"><svg width="9" height="7"><use href="#down"/></svg></button>
            </div>
        </div>
        <div class="flex items-center flex-1 border-t border-[#999]">
            <input type="text" aria-label="Command" value="Specify top radius or [Diameter] &lt;50.0000&gt;:" class="flex-1 min-w-0 h-full pl-[2px]">
            <div class="w-[66px] h-full flex items-center bg-[#f7f6f0] gap-[2px] pl-[3px]">
                <button aria-label="Scroll left" class="sb w-[14px] h-[15px]"><svg width="7" height="9"><use href="#left"/></svg></button>
                <div class="sb w-4 h-[15px]"><svg width="8" height="8"><path d="M1.500 0v8M3.500 0v8M5.500 0v8M7.500 0v8" stroke="#86a0dc"/></svg></div>
                <button aria-label="Scroll right" class="sb w-[14px] h-[15px] ml-auto"><svg width="7" height="9"><use href="#right"/></svg></button>
            </div>
            <div class="w-[18px] h-full bg-[#e8e6d8]"></div>
        </div>
    </div>
</section>

<!-- Status bar -->
<footer class="h-[25px] shrink-0 flex border-t border-black bg-linear-to-b from-[#7c7c7c] to-[#8e8e8e] ml-[3px] mr-[3px] pb-[3px] text-[#111]">
    <div class="w-[173px] pl-3 flex items-center font-['Liberation_Sans']">66.6504, 225.7663, 0.0000</div>
    <div class="flex">
        <button class="st" aria-label="Infer constraints"><svg width="17" height="16"><path d="M0 6.500h14M6.500 0v13M4.500 4.500h4v4h-4z" stroke="#222"/><path d="M12.500 8.500h3v3h-3zM9.500 11.500h3v3h-3z" fill="#ddd" stroke="#8a5563"/></svg></button>
        <button class="st" aria-label="Snap"><svg width="14" height="14"><path d="M1 2.500h8M1 5.500h8M1 8.500h8M1 11.500h12" stroke="#333" stroke-dasharray="1 2"/><path d="M11.500 2v9" stroke="#111" stroke-dasharray="3 1"/></svg></button>
        <button class="st" aria-label="Grid"><svg width="17" height="17"><path d="M.5.500h16v16H.5z" fill="#f2f2f2"/><path d="M.5.500h16v16H.5zM3.500 0v17M6.500 0v17M9.500 0v17M12.500 0v17M0 3.500h17M0 6.500h17M0 9.500h17M0 12.500h17" stroke="#444"/></svg></button>
        <button class="st" aria-label="Ortho"><svg width="17" height="17"><path d="M1.500 1v14.500H16M1.500 9.500h6v6" stroke="#444"/></svg></button>
        <button class="st on" aria-label="Polar"><svg width="15" height="15"><path d="M12.500 8.500A5 5 0 1 1 8 3.500M12 1L4.500 8.500h9" stroke="#123"/></svg></button>
        <button class="st on" aria-label="Object snap"><svg width="17" height="17"><path d="M3.500 3.500h12v12h-12z" fill="#f6f6fa" stroke="#333"/><circle cx="3" cy="3" r="2" fill="#fff" stroke="#d0652a"/></svg></button>
        <button class="st" aria-label="3D object snap"><svg width="17" height="17"><path d="M3.500 4.500l3-3h9v9l-3 3h-9z" fill="#eee" stroke="#333"/><path d="M3.500 4.500h9v9M12.500 4.500l3-3" stroke="#888"/><circle cx="3" cy="13.500" r="2" fill="#fff" stroke="#d0652a"/></svg></button>
        <button class="st on" aria-label="Object snap tracking"><svg width="14" height="14"><path d="M12 1L2 12.500h11" stroke="#222"/></svg></button>
        <button class="st on" aria-label="Dynamic UCS"><svg width="17" height="17"><path d="M2.500 0v14.500H17M3 14l6-6M0 3l2.500-3L5 3M14 12l3 2.500-3 2.500" stroke="#556"/><path d="M13 0l-4 5h3l-2 4 5-5h-3l3-4z" fill="#f7a731" stroke="#b67a10"/></svg></button>
        <button class="st on" aria-label="Dynamic input"><svg width="15" height="13"><path d="M0 5.500h10M4.500 1v10" stroke="#111"/><path d="M6.500 7.500h6v3h-6z" fill="#fff" stroke="#111"/></svg></button>
        <button class="st" aria-label="Lineweight"><svg width="14" height="14"><path d="M0 7.500h14" stroke="#111"/><path d="M7 1v12" stroke="#111" stroke-width="2"/></svg></button>
        <button class="st on" aria-label="Transparency"><svg width="17" height="17"><path d="M.5.500h16v16H.5z" fill="#dcecfa" stroke="#2a6aa8"/><path d="M2 3h13M2 7h13M2 11h13M2 15h13" stroke="#7aa8d8" stroke-width="2" stroke-dasharray="2 2"/><path d="M4 5h11M4 9h11M4 13h11" stroke="#7aa8d8" stroke-width="2" stroke-dasharray="2 2"/></svg></button>
        <button class="st" aria-label="Quick properties"><svg width="10" height="12"><path d="M1 1h8v10H1z" fill="#fff" stroke="#111"/><path d="M2 3.500h6M2 5.500h6M2 7.500h6" stroke="#111" stroke-dasharray="2 1"/></svg></button>
        <button class="st" aria-label="Selection cycling"><svg width="17" height="17"><path d="M0 4.500h9M4.500 0v9" stroke="#222"/><path d="M6.500 6.500h7v7h-7z" fill="#e8e8e8" stroke="#333"/><path d="M9.500 9.500h7v7h-7z" fill="#7fc36a" stroke="#222"/></svg></button>
    </div>
    <div class="ml-auto flex">
        <button class="st !w-[45px] text-[11px] border-l border-l-[#555]">MODEL</button>
        <button class="st" aria-label="Quick view layouts"><svg width="16" height="16"><path d="M2.500 1.500h11v10h-11z" fill="#eee" stroke="#222"/><path d="M5 4v5h5zM0 14.500h16" stroke="#222"/></svg></button>
        <button class="st" aria-label="Quick view drawings"><svg width="17" height="14"><path d="M.5 1.500h7v5h-7zM9.500 1.500h7v5h-7z" fill="#eee" stroke="#222"/><path d="M1 10.500h15" stroke="#333" stroke-width="3"/></svg></button>
        <button class="st !w-[52px] gap-1 ml-3" aria-label="Annotation scale"><svg width="15" height="15"><use href="#scale"/></svg><span class="font-['Liberation_Sans'] text-[12px]">1:1</span><svg width="7" height="4"><use href="#caret"/></svg></button>
        <button class="st" aria-label="Annotation visibility"><svg width="17" height="16"><use href="#scale"/><circle cx="13" cy="10" r="3" fill="#ffd65c" stroke="#b88a1c"/></svg></button>
        <button class="st" aria-label="Auto scale"><svg width="17" height="16" opacity=".5"><use href="#scale"/></svg></button>
        <button class="st ml-[5px]" aria-label="Workspace"><svg width="17" height="17"><circle cx="8.500" cy="8.500" r="7" stroke="#222" stroke-width="2" stroke-dasharray="3 2"/><circle cx="8.500" cy="8.500" r="5.500" fill="#eee" stroke="#222"/><circle cx="8.500" cy="8.500" r="2.500" fill="#aaa" stroke="#222"/></svg></button>
        <button class="st" aria-label="Lock"><svg width="17" height="16"><path d="M1.500 7.500h9v7h-9z" fill="#eee" stroke="#222"/><path d="M8.500 7V4c0-4 6-4 6 0v3" stroke="#222" stroke-width="2"/><path d="M6 9v4" stroke="#222"/></svg></button>
        <button class="st" aria-label="Isolate objects"><svg width="18" height="16"><path d="M1.500 2.500h12v7h-12z" fill="#bbb" stroke="#333"/><path d="M4 9.500v4h4" stroke="#333"/><circle cx="13" cy="10" r="3" fill="#ffd65c" stroke="#b88a1c"/></svg></button>
        <button class="st !w-[13px] ml-[7px]" aria-label="Status menu"><svg width="5" height="3"><use href="#caret-s"/></svg></button>
        <button class="st !w-4" aria-label="Clean screen"><svg width="14" height="14"><path d="M.5.500h13v13H.5z" fill="#eee" stroke="#222"/><path d="M1 2h12" stroke="#555" stroke-width="3"/></svg></button>
        <svg class="ml-2 self-end" width="12" height="12"><path d="M9 1h2v2H9zM5 5h2v2H5zM9 5h2v2H9zM1 9h2v2H1zM5 9h2v2H5zM9 9h2v2H9z" fill="#ddd" stroke="none"/></svg>
    </div>
</footer>

<script>
    // Flat spiral: starts above the center and winds inwards, counterclockwise
    const cx = 302, cy = 247;
    const startRadius = 217, perTurn = 67.7;
    const endAngle = 4 * Math.PI + 0.57;
    const points = [];
    for (let i = 0; i <= 120; i++) {
        const t = endAngle * i / 120;
        const r = startRadius - perTurn * t / (2 * Math.PI);
        points.push((cx - r * Math.sin(t)).toFixed(1) + ' ' + (cy - r * Math.cos(t)).toFixed(1));
    }
    document.getElementById('helix').setAttribute('d', 'M' + points.join('L'));
</script>

</body>
</html>
